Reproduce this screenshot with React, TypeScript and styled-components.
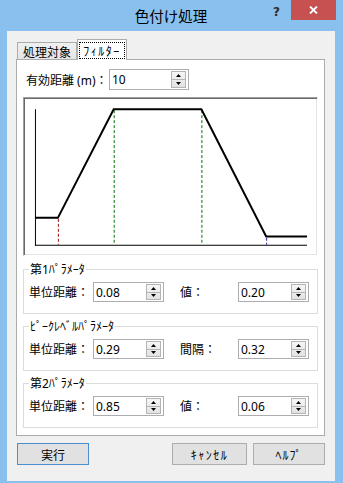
import React from 'react';
import styled, { createGlobalStyle } from 'styled-components';

const GlobalStyle = createGlobalStyle`
  html, body {
    margin: 0;
    padding: 0;
  }
  body {
    font-family: "Noto Sans", "Noto Sans CJK JP", sans-serif;
    font-size: 12px;
    color: #000;
  }
`;

const Window = styled.div`
  width: 343px;
  height: 483px;
  box-sizing: border-box;
  padding: 0 8px 2px 7px;
  background: #8ac0ee;
  display: flex;
  flex-direction: column;
`;

const TitleBar = styled.div`
  height: 31px;
  flex: none;
  display: grid;
  grid-template-columns: 1fr auto 1fr;
  align-items: start;
`;

const Title = styled.div`
  grid-column: 2;
  line-height: 32px;
  font-family: "Noto Sans CJK JP", sans-serif;
  font-size: 14.5px;
  color: #000;
`;

const Controls = styled.div`
  grid-column: 3;
  justify-self: end;
  display: flex;
  align-items: flex-start;
  margin-right: -1px;
`;

const HelpMark = styled.div`
  font-family: "DejaVu Sans", sans-serif;
  font-weight: bold;
  font-size: 12px;
  line-height: 12px;
  color: #2b2b2b;
  margin: 6px 11px 0 0;
`;

const CloseButton = styled.div`
  width: 45px;
  height: 20px;
  flex: none;
  background: #c75050;
  display: flex;
  align-items: center;
  justify-content: center;
`;

const Client = styled.div`
  flex: 1;
  background: #f0f0f0;
  padding: 8px 10px 16px 9px;
  display: flex;
  flex-direction: column;
`;

const TabStrip = styled.div`
  height: 20px;
  display: flex;
  align-items: flex-end;
  padding-left: 1px;
`;

const Tab = styled.div<{ $active?: boolean; $width: number }>`
  box-sizing: border-box;
  width: ${p => p.$width}px;
  height: ${p => (p.$active ? 21 : 17)}px;
  margin-bottom: ${p => (p.$active ? -1 : 0)}px;
  border: 1px solid #acacac;
  border-bottom: none;
  background: ${p => (p.$active ? '#fff' : 'linear-gradient(#f0f0f0, #e5e5e5)')};
  position: relative;
  z-index: ${p => (p.$active ? 1 : 0)};
  display: flex;
  align-items: ${p => (p.$active ? 'flex-start' : 'center')};
  justify-content: center;
  padding: ${p => (p.$active ? '2px 1px 0' : '0')};
  font-family: "Noto Sans CJK JP", sans-serif;
`;

const FocusText = styled.div`
  flex: 1;
  height: 17px;
  box-sizing: border-box;
  border: 1px dotted #000;
  display: flex;
  align-items: center;
  justify-content: center;
  letter-spacing: 1.5px;
`;

const Panel = styled.div`
  background: #fff;
  border: 1px solid #acacac;
  padding: 9px 6px 7px;
  display: flex;
  flex-direction: column;
`;

const Row = styled.div<{ $indent?: number }>`
  display: flex;
  align-items: center;
  padding-left: ${p => p.$indent ?? 0}px;
`;

const Label = styled.div<{ $width: number; $gap?: number }>`
  width: ${p => p.$width}px;
  margin-left: ${p => p.$gap ?? 0}px;
  font-family: "Noto Sans", "Noto Sans CJK JP", sans-serif;
  font-size: 12px;
  white-space: nowrap;
`;

const Field = styled.div<{ $width: number; $height: number }>`
  box-sizing: border-box;
  width: ${p => p.$width}px;
  height: ${p => p.$height}px;
  border: 1px solid #abadb3;
  background: #fff;
  display: flex;
`;

const FieldValue = styled.div`
  flex: 1;
  display: flex;
  align-items: center;
  padding-left: 2px;
  font-family: "Noto Sans", sans-serif;
  font-size: 12px;
`;

const Spin = styled.div`
  width: 15px;
  box-sizing: border-box;
  margin: 1px 2px 1px 0;
  border: 1px solid #b4b4b4;
  background: linear-gradient(#f6f6f6, #e2e2e2);
  display: flex;
  flex-direction: column;
`;

const SpinHalf = styled.div`
  flex: 1;
  display: flex;
  align-items: center;
  justify-content: center;
  & + & {
    border-top: 1px solid #b4b4b4;
  }
`;

const GraphBox = styled.div`
  margin-top: 7px;
  height: 159px;
  box-sizing: border-box;
  border: 1px solid;
  border-color: #a0a0a0 #fff #fff #a0a0a0;
  box-shadow: inset 1px 1px 0 #696969, inset -1px -1px 0 #e3e3e3;
  background: #fff;
  display: flex;
`;

const GroupBox = styled.div<{ $top: number }>`
  position: relative;
  margin-top: ${p => p.$top}px;
  height: 45px;
  box-sizing: border-box;
  border: 1px solid #dcdcdc;
  padding: 12px 0 0 5px;
`;

const Legend = styled.div`
  position: absolute;
  top: -8px;
  left: 5px;
  padding: 0 1px;
  line-height: 15px;
  background: #fff;
  font-family: "Noto Sans", "Noto Sans CJK JP", sans-serif;
  font-size: 12px;
`;

const ButtonRow = styled.div`
  margin-top: 7px;
  display: flex;
  padding-left: 1px;
`;

const Button = styled.div<{ $width: number; $default?: boolean; $push?: boolean; $gap?: number; $spacing?: number }>`
  box-sizing: border-box;
  width: ${p => p.$width}px;
  height: 22px;
  margin-left: ${p => (p.$push ? 'auto' : `${p.$gap ?? 0}px`)};
  border: 1px solid ${p => (p.$default ? '#4a8fd0' : '#adadad')};
  background: #e1e1e1;
  display: flex;
  align-items: center;
  justify-content: center;
  font-family: "Noto Sans CJK JP", sans-serif;
  font-size: 12px;
  letter-spacing: ${p => p.$spacing ?? 0}px;
`;

const Arrow = ({ up }: { up?: boolean }) => (
  <svg width="5" height="3" viewBox="0 0 5 3">
    <polygon points={up ? '2.5,0 5,3 0,3' : '0,0 5,0 2.5,3'} fill="#000" />
  </svg>
);

const SpinField = ({ value, width, height }: { value: string; width: number; height: number }) => (
  <Field $width={width} $height={height}>
    <FieldValue>{value}</FieldValue>
    <Spin>
      <SpinHalf><Arrow up /></SpinHalf>
      <SpinHalf><Arrow /></SpinHalf>
    </Spin>
  </Field>
);

const Graph = () => (
  <svg width="294" height="157" viewBox="24 98 294 157">
    <line x1="35.5" y1="109" x2="35.5" y2="246" stroke="#000" strokeWidth="1" />
    <line x1="35" y1="245.5" x2="308" y2="245.5" stroke="#000" strokeWidth="1" />
    <line x1="58.5" y1="219" x2="58.5" y2="245" stroke="#a01010" strokeDasharray="3 2" />
    <line x1="114.5" y1="110" x2="114.5" y2="245" stroke="#007000" strokeDasharray="3 2" />
    <line x1="202.5" y1="110" x2="202.5" y2="245" stroke="#007000" strokeDasharray="3 2" />
    <line x1="267.5" y1="238" x2="267.5" y2="245" stroke="#2020a0" strokeDasharray="3 2" />
    <polyline
      points="35,218 58,218 114,109 202,109 267,236.7 308,236.7"
      fill="none"
      stroke="#000"
      strokeWidth="2"
    />
  </svg>
);

const groups = [
  { title: '第1ﾊﾟﾗﾒｰﾀ', a: '単位距離：', av: '0.08', b: '値：', bv: '0.20', top: 13 },
  { title: 'ﾋﾟｰｸﾚﾍﾞﾙﾊﾟﾗﾒｰﾀ', a: '単位距離：', av: '0.29', b: '間隔：', bv: '0.32', top: 12 },
  { title: '第2ﾊﾟﾗﾒｰﾀ', a: '単位距離：', av: '0.85', b: '値：', bv: '0.06', top: 12 },
];

const App = () => {
  return (
    <>
      <GlobalStyle />
      <Window>
        <TitleBar>
          <Title>色付け処理</Title>
          <Controls>
            <HelpMark>?</HelpMark>
            <CloseButton>
              <svg width="9" height="8" viewBox="0 0 9 8">
                <path d="M1 0.5 L8 7.5 M8 0.5 L1 7.5" stroke="#fff" strokeWidth="1.8" />
              </svg>
            </CloseButton>
          </Controls>
        </TitleBar>
        <Client>
          <TabStrip>
            <Tab $width={60}>処理対象</Tab>
            <Tab $width={50} $active>
              <FocusText>ﾌｨﾙﾀｰ</FocusText>
            </Tab>
          </TabStrip>
          <Panel>
            <Row $indent={3}>
              <Label $width={83}>有効距離 (m)：</Label>
              <SpinField value="10" width={80} height={21} />
            </Row>
            <GraphBox>
              <Graph />
            </GraphBox>
            {groups.map(g => (
              <GroupBox key={g.title} $top={g.top}>
                <Legend>{g.title}</Legend>
                <Row>
                  <Label $width={64}>{g.a}</Label>
                  <SpinField value={g.av} width={71} height={20} />
                  <Label $width={58} $gap={16}>{g.b}</Label>
                  <SpinField value={g.bv} width={71} height={20} />
                </Row>
              </GroupBox>
            ))}
          </Panel>
          <ButtonRow>
            <Button $width={72} $default>実行</Button>
            <Button $width={75} $push $spacing={1.5}>ｷｬﾝｾﾙ</Button>
            <Button $width={72} $gap={6} $spacing={1}>ﾍﾙﾌﾟ</Button>
          </ButtonRow>
        </Client>
      </Window>
    </>
  );
};

export default App;
